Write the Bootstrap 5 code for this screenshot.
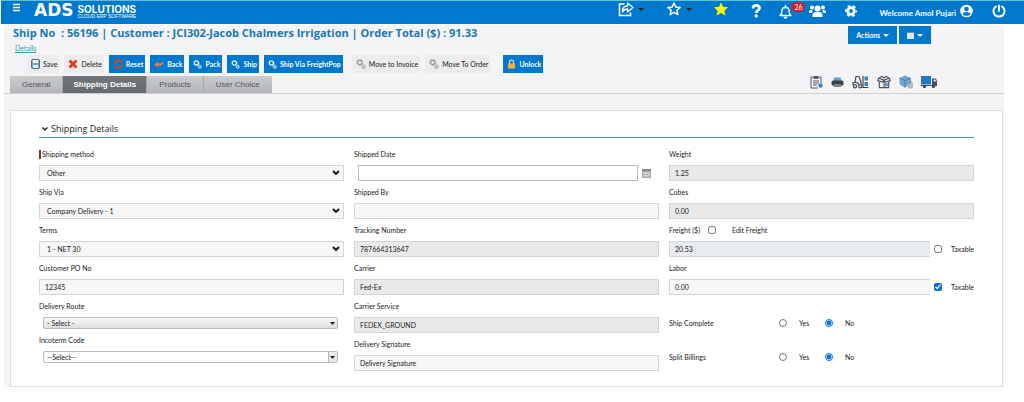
<!DOCTYPE html>
<html lang="en">
<head>
<meta charset="utf-8">
<meta name="viewport" content="width=device-width, initial-scale=1">
<title>Ship No 56196 - Shipping Details</title>
<link href="https://cdn.jsdelivr.net/npm/bootstrap@5.3.0/dist/css/bootstrap.min.css" rel="stylesheet">
<style>
  :root { --brand: #0078ce; --line: #d3d5d7; --ui: Lato, "Open Sans", sans-serif; --head: "Open Sans", "Noto Sans", sans-serif; }
  body { font-family: var(--ui); font-size: 7px; line-height: 16px; color: #222; background: #fff; }
  svg { display: block; flex: none; }
  .topbar { background: var(--brand); border-top: 1px solid #62bfd9; height: 24px; margin-left: 1px; padding: 0 18px 0 11px; color: #fff; }
  .topbar .plain { background: none; border: 0; padding: 0; color: #fff; line-height: 12px; }
  .brand-ads { font: bold 17px/18px "DejaVu Sans", sans-serif; }
  .brand-name { font: bold 10px/9px Inter, sans-serif; }
  .brand-sub { font: 5px/5px "Liberation Sans", sans-serif; }
  .brand-link { margin-left: 13px; color: #fff; }
  .slot { margin-left: 22px; }
  .slot-near { margin-left: 17px; }
  .slot-mid { margin-left: 19px; }
  .slot-low { padding-top: 4px; }
  .caret-down { width: 0; height: 0; border: 3px solid transparent; border-top-color: currentColor; border-bottom: 0; }
  .count { position: absolute; left: 12px; top: -7px; width: 14px; height: 10px; border-radius: 5px; background: #d0202a; font-size: 7px; line-height: 10px; text-align: center; }
  .welcome { font-size: 8px; font-weight: 700; }
  .sheet { margin: 1px 20px 0 4px; background: #f4f3f5; }
  .order-title { font: bold 11px/16px var(--head); color: #1678b8; margin: 0; padding-left: 9px; }
  .details-link { font-size: 7px; line-height: 14px; color: #3f97a8; margin-left: 11px; width: fit-content; }
  .tool { --bs-btn-border-radius: 0; --bs-btn-border-width: 0; --bs-btn-font-size: 7px; --bs-btn-line-height: 18px; --bs-btn-padding-y: 0;
    --bs-btn-color: #222; --bs-btn-bg: #ececec; --bs-btn-hover-bg: #ddd; height: 18px; padding: 0 2px 0 4px; display: flex; align-items: center; gap: 3px; white-space: nowrap; }
  .tool-blue { --bs-btn-color: #fff; --bs-btn-bg: var(--brand); --bs-btn-hover-bg: #0067b3; --bs-btn-hover-color: #fff; font-weight: 700; }
  .title-actions { gap: 2px; margin: 1px 73px 0 0; }
  .tools { gap: 5px; padding: 0 0 2px 23px; }
  .tools .apart { margin-left: 4px; }
  .tools .apart-more { margin-left: 8px; }
  .tabline { border-bottom: 1px solid #cfcfd1; padding: 0 67px 0 6px; }
  .tab-item { font: 8px/17px "Liberation Sans", sans-serif; color: #555; background: linear-gradient(#c9cbcd, #b3b6ba); padding: 0 12px; border-right: 1px solid #a5a8ab; }
  .tab-item.active { background: linear-gradient(#70757a, #666b70); color: #fff; font-weight: bold; padding: 0 10px; }
  .panel { margin: 16px 1px 0 6px; background: #fff; border: 1px solid #dedfe0; padding: 9px 28px 12px; }
  .sect { font: 9px/17px var(--head); margin: 0 0 5px; border-bottom: 1px solid #4c93ae; padding-left: 3px; gap: 3px; }
  .cols { display: grid; grid-template-columns: repeat(3, 1fr); gap: 10px; }
  .lbl { line-height: 22px; height: 22px; display: flex; align-items: center; white-space: nowrap; }
  .required::before { content: ""; width: 2px; height: 9px; background: #8c2a2a; margin-right: 1px; flex: none; }
  .box { font-size: 7px; line-height: 14px; height: 16px; min-height: 0; border-radius: 0; border: 1px solid var(--line); background-color: #f6f6f6; color: #222; padding: 0 5px; }
  .box.shade { background-color: #e9e9e9; }
  .box.tint { background-color: #e8ecef; }
  .box.open { border-right: 0; }
  select.box { padding: 0 7px; background: #f6f6f6 url("data:image/svg+xml,%3Csvg xmlns='http://www.w3.org/2000/svg' width='8' height='6'%3E%3Cpath d='M1 1l3 3 3-3' fill='none' stroke='%23111' stroke-width='1.8'/%3E%3C/svg%3E") no-repeat right 3px center / 8px 6px; }
  .box.date { background: #fff; border-color: #bbb; }
  .combo-wrap { padding: 0 6px 0 4px; }
  select.combo { height: 12px; line-height: 10px; padding: 0 3px; border-color: #b9b9b9; border-radius: 2px;
    background: url("data:image/svg+xml,%3Csvg xmlns='http://www.w3.org/2000/svg' width='5' height='3'%3E%3Cpath d='M0 0h5L2.500 3z' fill='%23222'/%3E%3C/svg%3E") no-repeat right 2px center / 5px 3px, linear-gradient(#f8f8f8, #dedede); }
  select.combo.split { background: url("data:image/svg+xml,%3Csvg xmlns='http://www.w3.org/2000/svg' width='9' height='10'%3E%3Cpath d='M0 0h9v10H0z' fill='%23e9e9e9'/%3E%3Cpath d='M0 0h1v10H0z' fill='%23b5b5b5'/%3E%3Cpath d='M2 4h5L4.500 7z' fill='%23222'/%3E%3C/svg%3E") no-repeat right 0 center / 9px 10px #fff; }
  .tick { width: 8px; height: 8px; margin: 0; flex: none; accent-color: #0b6fd8; }
  .extra { width: 44px; padding-left: 4px; flex: none; }
  .choice { height: 34px; display: grid; grid-template-columns: 110px 46px 46px; align-items: center; }
  .choices { margin-top: 11px; }
</style>
</head>
<body>
<svg width="0" height="0" class="position-absolute" aria-hidden="true">
  <symbol id="gears" viewBox="0 0 12 12"><circle cx="4.500" cy="4" r="2.700" fill="none" stroke="currentColor" stroke-width="1.500"/><circle cx="4.500" cy="4" r="3.700" fill="none" stroke="currentColor" stroke-width=".8" stroke-dasharray="1.400 1.500"/><circle cx="9" cy="9" r="1.600" fill="none" stroke="currentColor" stroke-width="1.200"/><circle cx="9" cy="9" r="2.500" fill="none" stroke="currentColor" stroke-width=".7" stroke-dasharray="1 1"/></symbol>
</svg>

<header class="topbar d-flex align-items-start">
  <button class="plain" type="button" aria-label="Menu"><svg width="9" height="12" viewBox="0 0 9 12" stroke="#fff" stroke-width="1.400"><path d="M1 3.500h7M1 6.500h7M1 9.500h7"/></svg></button>
  <a href="#" class="brand-link d-flex text-decoration-none gap-1">
    <span class="brand-ads">ADS</span>
    <span class="d-flex flex-column pt-1"><span class="brand-name">SOLUTIONS</span><span class="brand-sub">CLOUD ERP SOFTWARE</span></span>
  </a>
  <nav class="d-flex align-items-start ms-auto" aria-label="Account">
    <button class="plain slot slot-low d-flex align-items-center gap-1" type="button" aria-label="Share">
      <svg width="16" height="16" viewBox="0 0 16 16" fill="none" stroke="#fff" stroke-width="1.600"><path d="M6.500 3H1.500v11.500h11V11.500"/><path d="M4.500 11C4 7 6 5 9.500 5V2L15 6.500 9.500 11V8C7 8 5.500 8.700 4.500 11z" stroke-width="1.300" stroke-linejoin="round"/></svg>
      <span class="caret-down text-dark"></span></button>
    <button class="plain slot slot-low d-flex align-items-center gap-1" type="button" aria-label="Favourites">
      <svg width="16" height="16" viewBox="0 0 16 16"><path d="M8 2l1.800 4 4.400.4-3.300 2.900 1 4.300L8 11.400l-3.900 2.200 1-4.300L1.800 6.400 6.200 6z" fill="none" stroke="#fff" stroke-width="1.500" stroke-linejoin="round"/></svg>
      <span class="caret-down text-dark"></span></button>
    <button class="plain slot slot-low" type="button" aria-label="Starred"><svg width="14" height="16" viewBox="0 0 14 16"><path d="M7 1.500l2 4.300 5 .5-3.700 3.400 1.100 4.800L7 12l-4.400 2.500 1.100-4.800L0 6.300l5-.5z" fill="#ff0"/></svg></button>
    <button class="plain slot" type="button" aria-label="Help"><svg width="12" height="20" viewBox="0 0 12 20" fill="none" stroke="#fff"><path d="M3 7.500C3 3.500 9.500 3.500 9.500 7.100 9.500 9.500 6.200 9.500 6.200 12" stroke-width="2.800"/><circle cx="6.200" cy="15" r="1.700" fill="#fff" stroke="none"/></svg></button>
    <button class="plain slot-near position-relative mt-1" type="button" aria-label="Notifications, 26"><svg width="13" height="14" viewBox="0 0 13 14" fill="none" stroke="#fff" stroke-width="1.400"><path d="M1 10.500h11C10 9 10 7.500 10 5.500 10 1.500 3 1.500 3 5.500 3 7.500 3 9 1 10.500z" stroke-linejoin="round"/><path d="M6.500 0v2.500M5.200 11.500c0 2 2.600 2 2.600 0"/></svg><span class="count mt-1">26</span></button>
    <button class="plain slot-near" type="button" aria-label="Users"><svg width="17" height="20" viewBox="0 0 17 20" fill="#fff"><circle cx="8.500" cy="7.500" r="3"/><path d="M3.500 16v-2c0-2.500 2-3 5-3s5 .5 5 3v2z"/><circle cx="3" cy="6.500" r="2"/><circle cx="14" cy="6.500" r="2"/><path d="M0 12v-1.500C0 9 2 9 4.500 9.300 3 10 3 11 2.800 12zM17 12v-1.500C17 9 15 9 12.500 9.300 14 10 14 11 14.200 12z"/></svg></button>
    <button class="plain slot-mid" type="button" aria-label="Settings"><svg width="12" height="20" viewBox="0 0 12 20" fill="none" stroke="#fff"><circle cx="6" cy="10" r="3.300" stroke-width="2.800"/><circle cx="6" cy="10" r="5.300" stroke-width="1.700" stroke-dasharray="2.750 2.800" stroke-dashoffset="1.400"/></svg></button>
    <button class="plain slot welcome d-flex align-items-center" type="button"><span class="pt-1">Welcome Amol Pujari</span><svg class="ms-1" width="13" height="20" viewBox="0 0 13 20"><circle cx="6.500" cy="10" r="6.300" fill="#fff"/><circle cx="6.500" cy="8" r="2.300" fill="#0078ce"/><path d="M2.500 13.200c1-3 7-3 8 0-2 2-6 2-8 0z" fill="#0078ce"/></svg></button>
    <button class="plain slot-mid" type="button" aria-label="Sign out"><svg width="14" height="20" viewBox="0 0 14 20" fill="none" stroke="#fff" stroke-width="1.900" stroke-linecap="round"><path d="M4 5.500C-.5 8.500 1.500 15.500 7 15.500s7.500-7 3-10M7 4.500V10"/></svg></button>
  </nav>
</header>

<main class="sheet">
  <div class="d-flex align-items-start">
    <div class="flex-grow-1">
      <h1 class="order-title">Ship No &nbsp;: 56196 | Customer : JCI302-Jacob Chalmers Irrigation | Order Total ($) : 91.33</h1>
      <a href="#" class="details-link d-block">Details</a>
    </div>
    <div class="title-actions d-flex">
      <button class="btn tool tool-blue px-2" type="button">Actions <span class="caret-down"></span></button>
      <button class="btn tool tool-blue px-2" type="button" aria-label="Calendar"><svg width="7" height="8" viewBox="0 0 7 8"><path fill="#dde6ee" d="M0 1h7v7H0z"/><path fill="#888" d="M0 1h7v1H0z"/></svg><span class="caret-down"></span></button>
    </div>
  </div>

  <div class="tools d-flex" role="toolbar" aria-label="Order actions">
    <button class="btn tool" type="button"><svg width="9" height="10" viewBox="0 0 9 10"><rect x=".5" y=".5" width="8" height="9" rx="1" fill="#7fa3d6" stroke="#4a6fa8"/><path fill="#fff" d="M2 1h5v3H2z"/><path fill="#e4ecf7" d="M2 6h5v3H2z"/></svg>Save</button>
    <button class="btn tool" type="button"><svg width="10" height="10" viewBox="0 0 10 10"><path d="M1.500 1.500l7 7M8.500 1.500l-7 7" stroke="#e03a26" stroke-width="2.800"/></svg>Delete</button>
    <button class="btn tool tool-blue" type="button"><svg width="10" height="10" viewBox="0 0 10 10" fill="none"><path d="M2.500 2.200C5.500-.5 9.500 2 9 5.500 8.500 9.500 3 10 1.500 6.500" stroke="#b5522f" stroke-width="1.900"/><path fill="#b5522f" d="M1 0v4.500h4.500z"/></svg>Reset</button>
    <button class="btn tool tool-blue" type="button"><svg width="10" height="8" viewBox="0 0 10 8"><path d="M0 4.500L3.500 1.500v1.700C6 3.500 8 3 9.700 1 9.500 5 7 6.500 3.500 6v1.500z" fill="#e07b45"/></svg>Back</button>
    <button class="btn tool tool-blue" type="button"><svg width="9" height="9"><use href="#gears"/></svg>Pack</button>
    <button class="btn tool tool-blue" type="button"><svg width="9" height="9"><use href="#gears"/></svg>Ship</button>
    <button class="btn tool tool-blue" type="button"><svg width="9" height="9"><use href="#gears"/></svg>Ship Via FreightPop</button>
    <button class="btn tool apart" type="button"><svg width="10" height="10" color="#999"><use href="#gears"/></svg>Move to Invoice</button>
    <button class="btn tool" type="button"><svg width="10" height="10" color="#999"><use href="#gears"/></svg>Move To Order</button>
    <button class="btn tool tool-blue apart-more" type="button"><svg width="9" height="10" viewBox="0 0 9 10"><path d="M2.500 5V3c0-2.500 4-2.500 4 0v2" fill="none" stroke="#d9d9d9" stroke-width="1.300"/><rect x="1" y="4.500" width="7" height="5" fill="#f4b02a"/></svg>Unlock</button>
  </div>

  <div class="tabline d-flex align-items-end">
    <nav class="nav" aria-label="Sections">
      <a class="nav-link tab-item" href="#">General</a>
      <a class="nav-link tab-item active" href="#" aria-current="page">Shipping Details</a>
      <a class="nav-link tab-item" href="#">Products</a>
      <a class="nav-link tab-item border-0" href="#">User Choice</a>
    </nav>
    <div class="d-flex ms-auto gap-2 pb-1">
      <a href="#" aria-label="Checklist"><svg width="13" height="14" viewBox="0 0 13 14" fill="none" stroke="#555b62"><path d="M4 2H1v11h7M8 2h3v6"/><path d="M4 1.500h4v2H4z" fill="#555b62"/><path d="M3 6h6M3 8h6M3 10h4"/><circle cx="10.500" cy="10.500" r="2.200" fill="#3b82c4" stroke="none"/></svg></a>
      <a href="#" aria-label="Print"><svg width="13" height="14" viewBox="0 0 13 14"><path d="M3 2.500h6.500l1 3.500H2.500z" fill="#58a6dc"/><rect x=".5" y="5.500" width="12" height="5" rx="1.500" fill="#3b4046"/><path d="M3 9h7l.5 3h-8z" fill="#7d8489"/></svg></a>
      <a href="#" aria-label="Forklift"><svg width="17" height="14" viewBox="0 0 17 14" fill="none" stroke="#414951" stroke-width="1.200"><path d="M3 7.500L4 1.500h3l2 5.500v3M1 10V7.500h4l2 2M11 1v11.500h5.500"/><circle cx="3" cy="11.200" r="1.600"/><circle cx="8.300" cy="11.200" r="1.600"/><path d="M12.500 1.500h3.500v4h-3.500zM12.500 7h3.500v4h-3.500z" fill="#3b82c4" stroke="none"/></svg></a>
      <a href="#" aria-label="Open box"><svg width="14" height="14" viewBox="0 0 15 14" fill="none" stroke="#4c535a" stroke-width="1.200"><path d="M2.500 6v7h10V6M7.500 5v8M7.500 5L2 3 .8 5.500 6 7zM7.500 5L13 3l1.200 2.500L9 7zM2 3l3-2 2.500 1.500L10 1l3 2"/><path d="M9 9h2v2H9z" stroke="#3b82c4"/></svg></a>
      <a href="#" aria-label="Locked package"><svg width="14" height="14" viewBox="0 0 14 14"><path d="M6 .5l6 2.500v6L6 12.500.5 9.500V3z" fill="#6fa7d2"/><path d="M.5 3L6 5.500 12 3M6 5.500v7" stroke="#3f75a3" fill="none" stroke-width=".8"/><path d="M9 9h5v4.500H9z" fill="#b4b9bd"/><path d="M10 9V7.500c0-1.500 3-1.500 3 0V9" stroke="#8d9398" fill="none"/></svg></a>
      <a href="#" aria-label="Truck"><svg width="16" height="14" viewBox="0 0 16 14"><path d="M0 1h10v8.500H0z" fill="#2877c2"/><path d="M11 3.500h4l1 3v4h-5z" fill="#454c53"/><path d="M12.500 4.500h2l.5 2h-2.500z" fill="#dce8f1"/><path d="M0 10h16v1H0z" fill="#454c53"/><circle cx="3.500" cy="11.500" r="1.700" fill="#454c53"/><circle cx="12.500" cy="11.500" r="1.700" fill="#454c53"/></svg></a>
    </div>
  </div>

  <section class="panel">
    <h2 class="sect d-flex align-items-center"><svg width="6" height="6" viewBox="0 0 6 6"><path d="M.5 1.500L3 4l2.500-2.500" fill="none" stroke="#222" stroke-width="1.500"/></svg>Shipping Details</h2>
    <form class="cols">
      <div>
        <label class="lbl required" for="method">Shipping method</label>
        <select class="form-select box" id="method"><option>Other</option></select>
        <label class="lbl" for="via">Ship Via</label>
        <select class="form-select box" id="via"><option>Company Delivery - 1</option></select>
        <label class="lbl" for="terms">Terms</label>
        <select class="form-select box" id="terms"><option>1 - NET 30</option></select>
        <label class="lbl" for="po">Customer PO No</label>
        <input class="form-control box" id="po" value="12345">
        <label class="lbl" for="route">Delivery Route</label>
        <div class="combo-wrap"><select class="form-select box combo" id="route"><option>- Select -</option></select></div>
        <label class="lbl" for="inco">Incoterm Code</label>
        <div class="combo-wrap"><select class="form-select box combo split" id="inco"><option>--Select--</option></select></div>
      </div>
      <div>
        <label class="lbl" for="sdate">Shipped Date</label>
        <div class="d-flex align-items-center ps-1 pe-2"><input class="form-control box date" id="sdate">
          <button type="button" class="btn p-0 border-0 ms-1" aria-label="Pick a date"><svg width="9" height="9" viewBox="0 0 9 9"><path d="M0 0h9v9H0z" fill="#aaa"/><path d="M0 0h9v2H0z" fill="#888"/><path d="M1.500 3.500h6v4h-6z" fill="#ddd"/><path d="M2.500 5h4v1h-4z" fill="#aaa"/></svg></button></div>
        <label class="lbl" for="sby">Shipped By</label>
        <input class="form-control box" id="sby">
        <label class="lbl" for="track">Tracking Number</label>
        <input class="form-control box shade" id="track" value="787664313647" readonly>
        <label class="lbl" for="carrier">Carrier</label>
        <input class="form-control box shade" id="carrier" value="Fed-Ex" readonly>
        <label class="lbl" for="service">Carrier Service</label>
        <input class="form-control box shade" id="service" value="FEDEX_GROUND" readonly>
        <label class="lbl" for="sign">Delivery Signature</label>
        <input class="form-control box" id="sign" value="Delivery Signature">
      </div>
      <div>
        <label class="lbl" for="weight">Weight</label>
        <input class="form-control box shade" id="weight" value="1.25" readonly>
        <label class="lbl" for="cubes">Cubes</label>
        <input class="form-control box shade" id="cubes" value="0.00" readonly>
        <div class="lbl"><label for="freight">Freight ($)</label><input class="tick ms-2" type="checkbox" id="editf"><label class="ms-3" for="editf">Edit Freight</label></div>
        <div class="d-flex"><input class="form-control box tint open" id="freight" value="20.53" readonly>
          <div class="extra d-flex align-items-center justify-content-between"><input class="tick" type="checkbox" id="tax1"><label for="tax1">Taxable</label></div></div>
        <label class="lbl" for="labor">Labor</label>
        <div class="d-flex"><input class="form-control box open" id="labor" value="0.00">
          <div class="extra d-flex align-items-center justify-content-between"><input class="tick" type="checkbox" id="tax2" checked><label for="tax2">Taxable</label></div></div>
        <div class="choices">
          <div class="choice" role="radiogroup" aria-label="Ship Complete"><span>Ship Complete</span>
            <span class="d-flex align-items-center"><input class="tick me-2" type="radio" name="sc" id="sc1"><label for="sc1" class="ps-1">Yes</label></span>
            <span class="d-flex align-items-center"><input class="tick me-2" type="radio" name="sc" id="sc2" checked><label for="sc2" class="ps-1">No</label></span></div>
          <div class="choice" role="radiogroup" aria-label="Split Billings"><span>Split Billings</span>
            <span class="d-flex align-items-center"><input class="tick me-2" type="radio" name="sb" id="sb1"><label for="sb1" class="ps-1">Yes</label></span>
            <span class="d-flex align-items-center"><input class="tick me-2" type="radio" name="sb" id="sb2" checked><label for="sb2" class="ps-1">No</label></span></div>
        </div>
      </div>
    </form>
  </section>
</main>
<script src="https://cdn.jsdelivr.net/npm/bootstrap@5.3.0/dist/js/bootstrap.bundle.min.js"></script>
</body>
</html>
